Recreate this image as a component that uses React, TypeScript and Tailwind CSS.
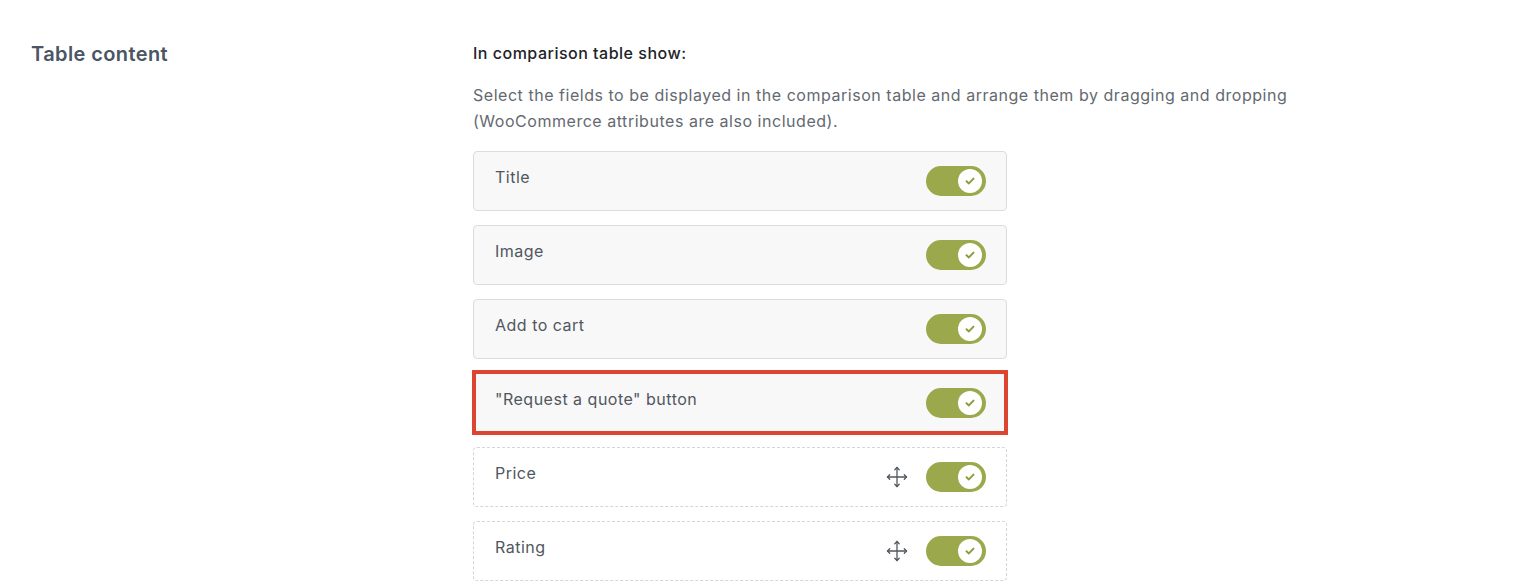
import React from "react";

const font = { fontFamily: 'Inter, "Noto Sans", "Liberation Sans", sans-serif' };

function Toggle() {
  return (
    <div className="w-[60px] h-[30px] rounded-full bg-[#9ba84b] flex items-center justify-end pr-[4px] shrink-0">
      <div className="w-[24px] h-[24px] rounded-full bg-white flex items-center justify-center">
        <svg width="10" height="8" viewBox="0 0 10 8" fill="none">
          <path d="M1.5 4.2 L3.9 6.4 L8.5 1.6" stroke="#8e9c3f" strokeWidth="2" strokeLinecap="round" strokeLinejoin="round" />
        </svg>
      </div>
    </div>
  );
}

function MoveIcon() {
  return (
    <svg width="22" height="22" viewBox="0 0 22 22" fill="none" stroke="#50575e" strokeWidth="1.3" strokeLinecap="round" strokeLinejoin="round">
      <path d="M11 1.5 V20.5" />
      <path d="M1.5 11 H20.5" />
      <path d="M8.8 3.7 L11 1.5 L13.2 3.7" />
      <path d="M8.8 18.3 L11 20.5 L13.2 18.3" />
      <path d="M3.7 8.8 L1.5 11 L3.7 13.2" />
      <path d="M18.3 8.8 L20.5 11 L18.3 13.2" />
    </svg>
  );
}

type Row = { label: string; fixed: boolean; highlight?: boolean };

const rows: Row[] = [
  { label: "Title", fixed: true },
  { label: "Image", fixed: true },
  { label: "Add to cart", fixed: true },
  { label: '"Request a quote" button', fixed: true, highlight: true },
  { label: "Price", fixed: false },
  { label: "Rating", fixed: false },
];

function FieldRow({ row }: { row: Row }) {
  return (
    <div
      className={
        row.fixed
          ? "relative h-[60px] rounded-[4px] border border-[#dcdcde] bg-[#f8f8f8] flex items-start justify-between pl-[21px] pr-[20px] pt-[14px]"
          : "relative h-[60px] rounded-[4px] border border-dashed border-[#d5d5d8] bg-white flex items-start justify-between pl-[21px] pr-[20px] pt-[14px]"
      }
    >
      <span className="-mt-[1px] text-[16px] leading-[24px] tracking-[0.5px] text-[#50575e]">{row.label}</span>
      <div className="flex items-center gap-[18px]">
        {!row.fixed && <MoveIcon />}
        <Toggle />
      </div>
      {row.highlight && (
        <div className="absolute -top-[4px] -bottom-[3px] -left-[2px] -right-[2px] border-4 border-[#dc4530] pointer-events-none" />
      )}
    </div>
  );
}

export default function App() {
  return (
    <div className="w-[1530px] h-[586px] bg-white overflow-hidden" style={font}>
      <div className="flex pl-[31px] pt-[40px]">
        <div className="w-[442px] shrink-0">
          <h2 className="text-[20px] leading-[28px] font-semibold tracking-[0.4px] text-[#4b5563]">Table content</h2>
        </div>
        <div className="pt-[3px]">
          <p className="text-[16px] leading-[20px] font-medium tracking-[0.5px] text-[#1d2327]">In comparison table show:</p>
          <p className="mt-[19px] text-[16px] leading-[26px] tracking-[0.53px] text-[#646970]">
            Select the fields to be displayed in the comparison table and arrange them by dragging and dropping
            <br />
            (WooCommerce attributes are also included).
          </p>
          <div className="mt-[17px] w-[534px] flex flex-col gap-[14px]">
            {rows.map((r) => (
              <FieldRow key={r.label} row={r} />
            ))}
          </div>
        </div>
      </div>
    </div>
  );
}
